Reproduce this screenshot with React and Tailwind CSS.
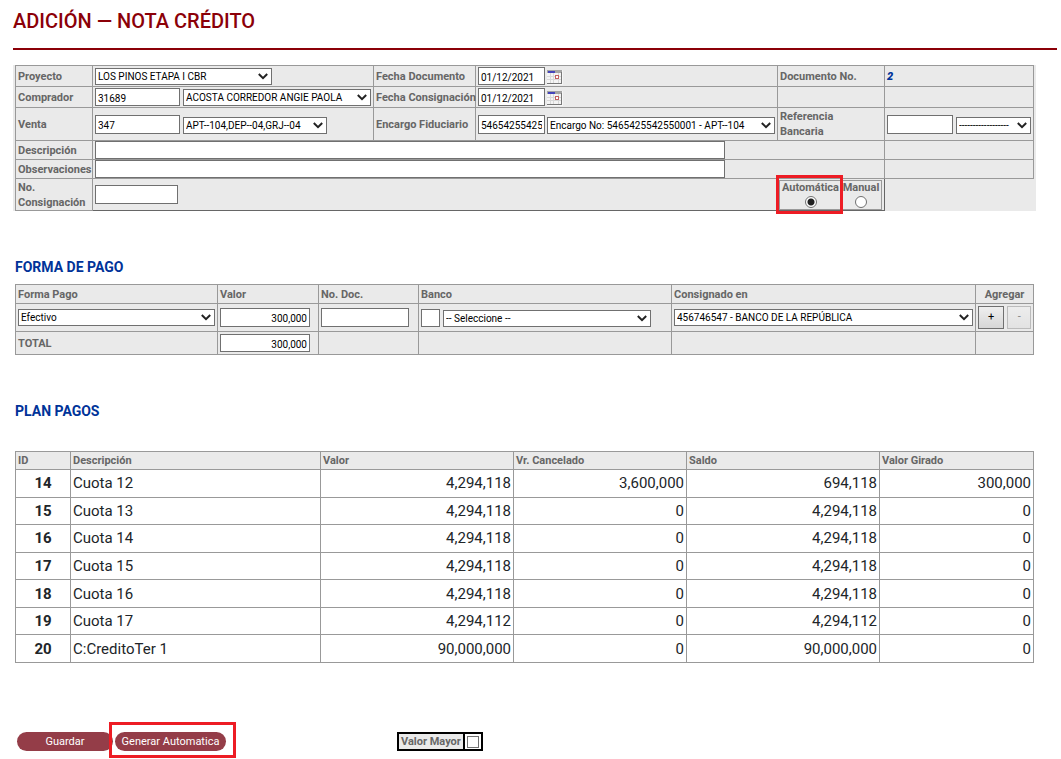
import React from 'react';

const cuotas = [
    { id: 14, descripcion: 'Cuota 12', valor: '4,294,118', cancelado: '3,600,000', saldo: '694,118', girado: '300,000' },
    { id: 15, descripcion: 'Cuota 13', valor: '4,294,118', cancelado: '0', saldo: '4,294,118', girado: '0' },
    { id: 16, descripcion: 'Cuota 14', valor: '4,294,118', cancelado: '0', saldo: '4,294,118', girado: '0' },
    { id: 17, descripcion: 'Cuota 15', valor: '4,294,118', cancelado: '0', saldo: '4,294,118', girado: '0' },
    { id: 18, descripcion: 'Cuota 16', valor: '4,294,118', cancelado: '0', saldo: '4,294,118', girado: '0' },
    { id: 19, descripcion: 'Cuota 17', valor: '4,294,112', cancelado: '0', saldo: '4,294,112', girado: '0' },
    { id: 20, descripcion: 'C:CreditoTer 1', valor: '90,000,000', cancelado: '0', saldo: '90,000,000', girado: '0' },
];

const cell = 'border border-[#999] px-[2px] py-0';
const head = `${cell} text-left text-[11px] leading-[15px] font-bold text-[#666]`;

function TextBox({ className, ...props }) {
    return (
        <input
            type="text"
            className={`block border border-[#707070] bg-white px-[2px] pt-[2px] text-[10px] leading-[15px] text-black ${className}`}
            {...props}
        />
    );
}

function Select({ className, option, ...props }) {
    return (
        <div className={`relative ${className}`}>
            <select
                className="block h-[17px] w-full appearance-none border border-[#707070] bg-white pr-[14px] pl-[2px] text-[10px] leading-[15px] text-black"
                {...props}
            >
                <option>{option}</option>
            </select>
            <svg viewBox="0 0 10 7" className="pointer-events-none absolute top-[5px] right-[4px] h-[7px] w-[10px]" fill="none" stroke="#222" strokeWidth="2">
                <path d="M0.8 1L5 5.2L9.2 1" />
            </svg>
        </div>
    );
}

function CalendarButton({ label }) {
    return (
        <button type="button" aria-label={label} className="block">
            <svg width="16" height="15" viewBox="0 0 16 15" shapeRendering="crispEdges">
                <rect width="16" height="15" fill="#f6f6f6" />
                <rect width="15" height="14" fill="#aaa" />
                <rect x="0" y="3" width="14" height="10" fill="#f4f4f4" />
                <rect x="0" y="0" width="15" height="3" fill="#a4a4a4" />
                <rect x="1" y="1" width="7" height="2" fill="#4444bb" />
                <path d="M0 6.5H14M0 9.5H14M3.5 3V13M6.5 3V13M11.5 3V13" stroke="#d8d8d8" />
                <rect x="8.5" y="5.5" width="3" height="3" fill="#fff" stroke="#c46060" />
                <path d="M14.5 2V14M0 13.5H15" stroke="#777" />
            </svg>
        </button>
    );
}

function DatosDocumento() {
    return (
        <div className="mt-[15px] mr-[25px] ml-[13px] bg-[#eaeaea] pr-[2px] pl-[2px]">
            <table className="w-full table-fixed border-collapse">
                <colgroup>
                    <col className="w-[77px]" />
                    <col className="w-[281px]" />
                    <col className="w-[102px]" />
                    <col className="w-[302px]" />
                    <col className="w-[107px]" />
                    <col className="w-[149px]" />
                </colgroup>
                <tbody>
                    <tr className="h-[21px]">
                        <th className={head}><label htmlFor="proyecto">Proyecto</label></th>
                        <td className={cell}>
                            <Select id="proyecto" className="w-[177px]" option="LOS PINOS ETAPA I CBR" />
                        </td>
                        <th className={head}><label htmlFor="fechaDocumento">Fecha Documento</label></th>
                        <td className={cell}>
                            <div className="flex items-end gap-[2px]">
                                <TextBox id="fechaDocumento" className="h-[18px] w-[67px]" defaultValue="01/12/2021" />
                                <CalendarButton label="Elegir fecha documento" />
                            </div>
                        </td>
                        <th className={head}>Documento No.</th>
                        <td className={`${cell} text-[11px] leading-[15px] font-black text-[#003399] italic`}>2</td>
                    </tr>
                    <tr className="h-[21px]">
                        <th className={head}><label htmlFor="comprador">Comprador</label></th>
                        <td className={cell}>
                            <div className="flex items-end gap-[3px]">
                                <TextBox id="comprador" className="h-[18px] w-[85px]" defaultValue="31689" />
                                <Select aria-label="Nombre comprador" className="w-[188px]" option="ACOSTA CORREDOR ANGIE PAOLA" />
                            </div>
                        </td>
                        <th className={head}><label htmlFor="fechaConsignacion" className="whitespace-nowrap">Fecha Consignación</label></th>
                        <td className={cell}>
                            <div className="flex items-end gap-[2px]">
                                <TextBox id="fechaConsignacion" className="h-[18px] w-[67px]" defaultValue="01/12/2021" />
                                <CalendarButton label="Elegir fecha consignación" />
                            </div>
                        </td>
                        <td className={cell} />
                        <td className={cell} />
                    </tr>
                    <tr className="h-[33px]">
                        <th className={head}><label htmlFor="venta">Venta</label></th>
                        <td className={cell}>
                            <div className="flex items-end gap-[3px]">
                                <TextBox id="venta" className="h-[19px] w-[85px]" defaultValue="347" />
                                <Select aria-label="Inmuebles" className="w-[144px]" option="APT--104,DEP--04,GRJ--04" />
                            </div>
                        </td>
                        <th className={head}><label htmlFor="encargo">Encargo Fiduciario</label></th>
                        <td className={cell}>
                            <div className="flex items-end gap-[2px]">
                                <TextBox id="encargo" className="h-[19px] w-[67px]" defaultValue="5465425542550001" />
                                <Select aria-label="Encargo" className="w-[228px]" option="Encargo No: 5465425542550001 - APT--104" />
                            </div>
                        </td>
                        <th className={head}><label htmlFor="referencia">Referencia<br />Bancaria</label></th>
                        <td className={cell}>
                            <div className="flex items-end gap-[3px]">
                                <TextBox id="referencia" className="h-[19px] w-[66px]" />
                                <Select aria-label="Referencias" className="w-[76px]" option="------------------" />
                            </div>
                        </td>
                    </tr>
                    <tr className="h-[19px]">
                        <th className={head}><label htmlFor="descripcion">Descripción</label></th>
                        <td className={cell} colSpan={4}>
                            <TextBox id="descripcion" className="h-[18px] w-4/5" />
                        </td>
                        <td className={cell} />
                    </tr>
                    <tr className="h-[19px]">
                        <th className={head}><label htmlFor="observaciones">Observaciones</label></th>
                        <td className={cell} colSpan={4}>
                            <TextBox id="observaciones" className="h-[18px] w-4/5" />
                        </td>
                        <td className={cell} />
                    </tr>
                    <tr className="h-[32px]">
                        <th className={head}><label htmlFor="consignacion">No.<br />Consignación</label></th>
                        <td className="border border-[#666] border-t-[#999] border-l-[#999] p-0 px-[2px]" colSpan={4}>
                            <div className="flex items-center justify-between">
                                <TextBox id="consignacion" className="h-[19px] w-[83px]" />
                                <div className="flex h-[30px] border border-[#999] text-center text-[11px] leading-[14px] font-bold text-[#666]">
                                    <div className="relative w-[61px]">
                                        <label className="flex flex-col items-center gap-px">
                                            Automática
                                            <input type="radio" name="modo" defaultChecked className="size-3 appearance-none rounded-full border border-[#707070] bg-white checked:bg-[radial-gradient(circle,#222_0_3px,#fff_4px)]" />
                                        </label>
                                        <span className="pointer-events-none absolute -top-[6px] -left-[4px] h-[39px] w-[67px] border-[3px] border-[#ed1c24]" />
                                    </div>
                                    <label className="flex w-[40px] flex-col items-center gap-px">
                                        Manual
                                        <input type="radio" name="modo" className="size-3 appearance-none rounded-full border border-[#707070] bg-white checked:bg-[radial-gradient(circle,#222_0_3px,#fff_4px)]" />
                                    </label>
                                </div>
                            </div>
                        </td>
                        <td />
                    </tr>
                </tbody>
            </table>
        </div>
    );
}

function FormaPago() {
    return (
        <section className="mt-[46px] mr-[27px] ml-[15px]">
            <h2 className="text-[14px] leading-[20px] font-bold text-[#003399]">FORMA DE PAGO</h2>
            <table className="mt-[7px] w-full table-fixed border-collapse bg-[#eaeaea]">
                <colgroup>
                    <col className="w-[202px]" />
                    <col className="w-[101px]" />
                    <col className="w-[100px]" />
                    <col className="w-[253px]" />
                    <col className="w-[304px]" />
                    <col className="w-[58px]" />
                </colgroup>
                <thead>
                    <tr className="h-[19px]">
                        <th className={head}>Forma Pago</th>
                        <th className={head}>Valor</th>
                        <th className={head}>No. Doc.</th>
                        <th className={head}>Banco</th>
                        <th className={head}>Consignado en</th>
                        <th className={`${cell} text-center text-[11px] leading-[15px] font-bold text-[#666]`}>Agregar</th>
                    </tr>
                </thead>
                <tbody>
                    <tr className="h-[28px]">
                        <td className={cell}><Select aria-label="Forma Pago" className="w-full" option="Efectivo" /></td>
                        <td className={cell}><TextBox aria-label="Valor" className="h-[19px] w-[90px] text-right" defaultValue="300,000" /></td>
                        <td className={cell}><TextBox aria-label="No. Doc." className="h-[19px] w-[88px]" /></td>
                        <td className={cell}>
                            <div className="flex items-end gap-[3px]">
                                <TextBox aria-label="Código banco" className="h-[18px] w-[19px]" />
                                <Select aria-label="Banco" className="w-[208px]" option="-- Seleccione --" />
                            </div>
                        </td>
                        <td className={cell}><Select aria-label="Consignado en" className="w-full" option="456746547 - BANCO DE LA REPÚBLICA" /></td>
                        <td className={cell}>
                            <div className="flex gap-[3px] text-[11px]">
                                <button type="button" aria-label="Agregar fila" className="h-[23px] w-[27px] border border-[#707070] bg-linear-to-b from-[#efefef] to-[#d6d6d6] text-black">+</button>
                                <button type="button" aria-label="Quitar fila" disabled className="h-[23px] w-[24px] border border-[#bbb] bg-linear-to-b from-[#ededed] to-[#e2e2e2] text-[#838383]">-</button>
                            </div>
                        </td>
                    </tr>
                    <tr className="h-[23px]">
                        <th className={head}>TOTAL</th>
                        <td className={cell}><TextBox aria-label="Total" className="h-[18px] w-[90px] text-right" defaultValue="300,000" /></td>
                        <td className={cell} />
                        <td className={cell} />
                        <td className={cell} />
                        <td className={cell} />
                    </tr>
                </tbody>
            </table>
        </section>
    );
}

function PlanPagos() {
    return (
        <section className="mt-[46px] mr-[27px] ml-[15px]">
            <h2 className="text-[14px] leading-[20px] font-bold text-[#003399]">PLAN PAGOS</h2>
            <table className="mt-[30px] h-[212px] w-full table-fixed border-collapse">
                <colgroup>
                    <col className="w-[55px]" />
                    <col className="w-[250px]" />
                    <col className="w-[193px]" />
                    <col className="w-[173px]" />
                    <col className="w-[193px]" />
                    <col className="w-[154px]" />
                </colgroup>
                <thead className="bg-[#eaeaea]">
                    <tr className="h-[18px]">
                        <th className={head}>ID</th>
                        <th className={head}>Descripción</th>
                        <th className={head}>Valor</th>
                        <th className={head}>Vr. Cancelado</th>
                        <th className={head}>Saldo</th>
                        <th className={head}>Valor Girado</th>
                    </tr>
                </thead>
                <tbody className="text-[15px] leading-[22px] text-[#212529]">
                    {cuotas.map((cuota) => (
                        <tr key={cuota.id}>
                            <th className={`${cell} text-center font-bold`}>{cuota.id}</th>
                            <td className={cell}>{cuota.descripcion}</td>
                            <td className={`${cell} text-right`}>{cuota.valor}</td>
                            <td className={`${cell} text-right`}>{cuota.cancelado}</td>
                            <td className={`${cell} text-right`}>{cuota.saldo}</td>
                            <td className={`${cell} text-right`}>{cuota.girado}</td>
                        </tr>
                    ))}
                </tbody>
            </table>
        </section>
    );
}

export default function App() {
    return (
        <main className="bg-white pb-2 font-[Roboto,sans-serif]">
            <header className="mr-1 ml-[13px] border-b-2 border-[#8b0008] pt-[6px] pb-[12px]">
                <h1 className="text-[20px] leading-[30px] font-medium text-[#8b0008]">ADICIÓN — NOTA CRÉDITO</h1>
            </header>

            <DatosDocumento />
            <FormaPago />
            <PlanPagos />

            {/* Acciones */}
            <div className="mt-[69px] ml-[17px] flex h-[19px] text-[11px] leading-[19px]">
                <button type="button" className="w-[96px] rounded-full bg-[#943d48] text-white">Guardar</button>
                <div className="relative ml-[2px] flex">
                    <button type="button" className="w-[111px] rounded-full bg-[#943d48] text-white">Generar Automatica</button>
                    <span className="pointer-events-none absolute -top-[10px] -left-[6px] h-[36px] w-[127px] border-[3px] border-[#ed1c24]" />
                </div>
                <label className="ml-[171px] flex border-2 border-black font-bold text-[#666]">
                    <span className="border-r-2 border-black bg-[#eaeaea] px-[2px] leading-[15px]">Valor Mayor</span>
                    <input type="checkbox" className="m-[2px] size-3 appearance-none border border-[#707070] bg-white checked:bg-[#707070]" />
                </label>
            </div>
        </main>
    );
}
